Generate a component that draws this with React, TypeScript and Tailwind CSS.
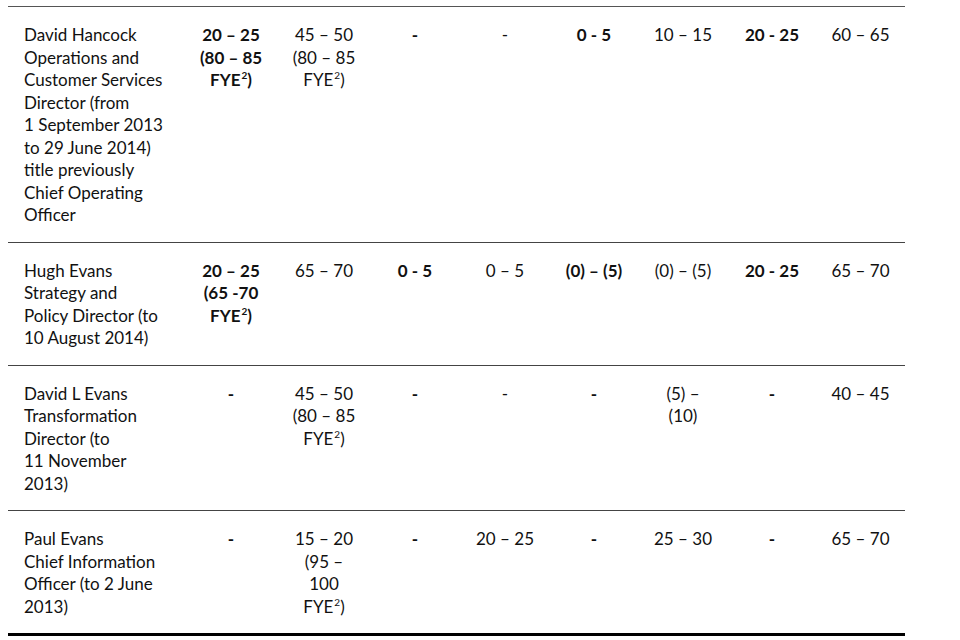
import React from 'react';

type Cell = { lines: React.ReactNode[]; bold?: boolean };

const Fye = () => (
  <>
    FYE<sup className="text-[10px] relative -top-[7px] ml-px">2</sup>)
  </>
);

const rows: { name: string[]; cells: Cell[] }[] = [
  {
    name: [
      'David Hancock',
      'Operations and',
      'Customer Services',
      'Director (from',
      '1 September 2013',
      'to 29 June 2014)',
      'title previously',
      'Chief Operating',
      'Officer',
    ],
    cells: [
      { lines: ['20 – 25', '(80 – 85', <Fye key="f" />], bold: true },
      { lines: ['45 – 50', '(80 – 85', <Fye key="f" />] },
      { lines: ['-'], bold: true },
      { lines: ['-'] },
      { lines: ['0 - 5'], bold: true },
      { lines: ['10 – 15'] },
      { lines: ['20 - 25'], bold: true },
      { lines: ['60 – 65'] },
    ],
  },
  {
    name: ['Hugh Evans', 'Strategy and', 'Policy Director (to', '10 August 2014)'],
    cells: [
      { lines: ['20 – 25', '(65 -70', <Fye key="f" />], bold: true },
      { lines: ['65 – 70'] },
      { lines: ['0 - 5'], bold: true },
      { lines: ['0 – 5'] },
      { lines: ['(0) – (5)'], bold: true },
      { lines: ['(0) – (5)'] },
      { lines: ['20 - 25'], bold: true },
      { lines: ['65 – 70'] },
    ],
  },
  {
    name: ['David L Evans', 'Transformation', 'Director (to', '11 November', '2013)'],
    cells: [
      { lines: ['-'], bold: true },
      { lines: ['45 – 50', '(80 – 85', <Fye key="f" />] },
      { lines: ['-'], bold: true },
      { lines: ['-'] },
      { lines: ['-'], bold: true },
      { lines: ['(5) –', '(10)'] },
      { lines: ['-'], bold: true },
      { lines: ['40 – 45'] },
    ],
  },
  {
    name: ['Paul Evans', 'Chief Information', 'Officer (to 2 June', '2013)'],
    cells: [
      { lines: ['-'], bold: true },
      { lines: ['15 – 20', '(95 –', '100', <Fye key="f" />] },
      { lines: ['-'], bold: true },
      { lines: ['20 – 25'] },
      { lines: ['-'], bold: true },
      { lines: ['25 – 30'] },
      { lines: ['-'], bold: true },
      { lines: ['65 – 70'] },
    ],
  },
];

const App: React.FC = () => {
  return (
    <div className="w-[960px] h-[640px] bg-white overflow-hidden text-[#111] font-['Lato',sans-serif] text-[17px] leading-[22.5px]">
      <div className="ml-2 mt-[6px] w-[897px] border-t border-[#555]">
        {rows.map((row, i) => (
          <div
            key={i}
            className={`grid grid-cols-[176px_94px_92px_90px_90px_88px_90px_88px_89px] pt-[17px] pb-[15px] ${
              i === rows.length - 1 ? 'border-b-[3px] border-black' : 'border-b border-[#444]'
            }`}
          >
            <div className="pl-4 whitespace-nowrap">
              {row.name.map((l, j) => (
                <div key={j}>{l}</div>
              ))}
            </div>
            {row.cells.map((c, j) => (
              <div key={j} className={`text-center whitespace-nowrap ${c.bold ? 'font-bold' : ''}`}>
                {c.lines.map((l, k) => (
                  <div key={k}>{l}</div>
                ))}
              </div>
            ))}
          </div>
        ))}
      </div>
    </div>
  );
};

export default App;
